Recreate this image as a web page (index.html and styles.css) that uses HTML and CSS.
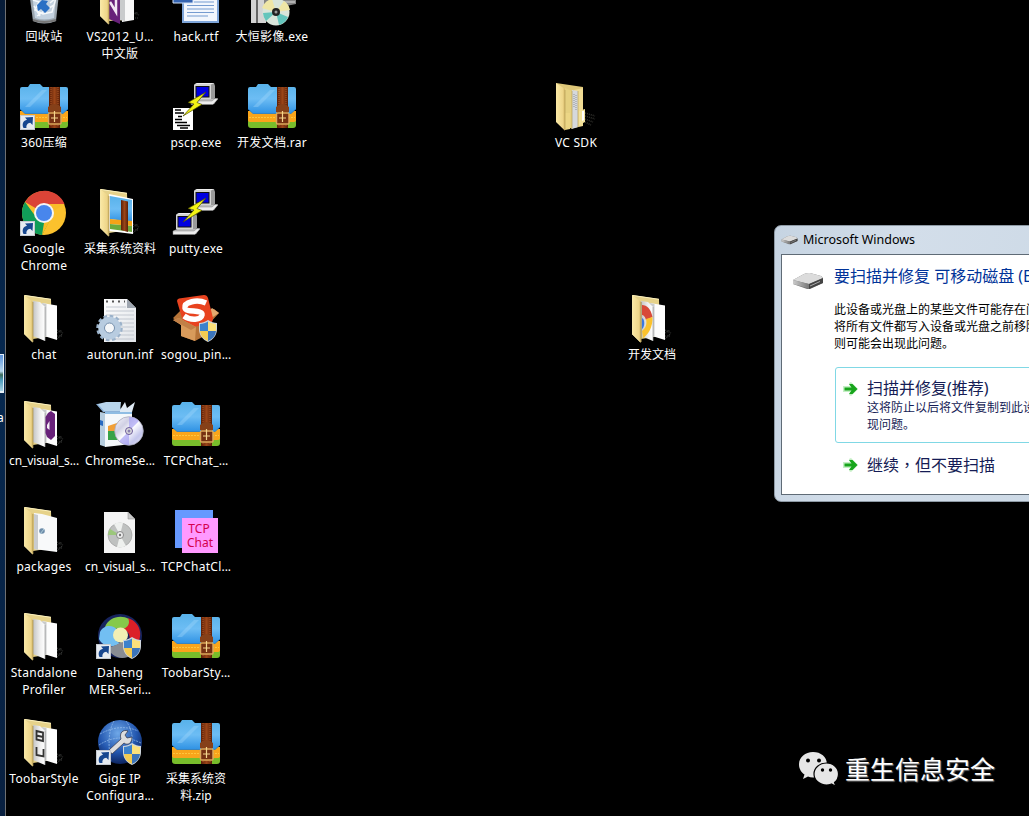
FILE: index.html
```html
<!DOCTYPE html>
<html lang="zh-CN">
<head>
<meta charset="utf-8">
<title>Desktop</title>
<link rel="stylesheet" href="styles.css">
</head>
<body>
<svg class="defs" aria-hidden="true">
  <defs>
    <linearGradient id="gFold" x1="0" x2="1"><stop offset="0" stop-color="#fbe9a6"/><stop offset=".75" stop-color="#eed68a"/><stop offset="1" stop-color="#d2b566"/></linearGradient>
    <linearGradient id="gBlue" x1="0" y1="0" x2="0" y2="1"><stop offset="0" stop-color="#58b2ea"/><stop offset=".5" stop-color="#6dbdf4"/><stop offset="1" stop-color="#2f92e4"/></linearGradient>
    <linearGradient id="gBelt" x1="0" x2="1"><stop offset="0" stop-color="#5c1f08"/><stop offset=".5" stop-color="#9a4518"/><stop offset="1" stop-color="#5a2009"/></linearGradient>
    <linearGradient id="gPage" x1="0" y1="0" x2="1" y2="1"><stop offset="0" stop-color="#fff"/><stop offset="1" stop-color="#dfe3e8"/></linearGradient>
    <linearGradient id="gPaper" x1="0" x2="1"><stop offset="0" stop-color="#c3c4c4"/><stop offset=".6" stop-color="#f0f0f0"/><stop offset="1" stop-color="#fff"/></linearGradient>
    <linearGradient id="gDisc" x1="0" y1="0" x2="1" y2="1"><stop offset="0" stop-color="#fafaff"/><stop offset=".3" stop-color="#d0d0e4"/><stop offset=".5" stop-color="#fff"/><stop offset=".75" stop-color="#c4c6ec"/><stop offset="1" stop-color="#e8e8f4"/></linearGradient>
    <radialGradient id="gGlobe" cx=".45" cy=".3" r=".7"><stop offset="0" stop-color="#6fa8e8"/><stop offset=".6" stop-color="#2458b0"/><stop offset="1" stop-color="#0c2460"/></radialGradient>
    <linearGradient id="gDrive" x1="0" x2="1"><stop offset="0" stop-color="#ccc"/><stop offset="1" stop-color="#777"/></linearGradient>

    <symbol id="arrow" viewBox="0 0 15 15">
      <rect x=".5" y=".5" width="14" height="14" fill="#e6ebf1" stroke="#c4c9d0"/>
      <path d="M3.500 13C1.500 9 3.500 5.500 7 4.800L5 2.500 13 2 12.500 10 10.300 7.800C7.500 8 6 10.500 6.500 13Z" fill="#17478f"/>
    </symbol>
    <symbol id="shield" viewBox="0 0 18 22">
      <path d="M9 0C12 2 15 3 18 3V9C18 15 14 20 9 22 4 20 0 15 0 9V3C3 3 6 2 9 0Z" fill="#cfd6dc"/>
      <path d="M9 1.500V11H1V4C4 4 6.500 3 9 1.500Z" fill="#3c82cc"/><path d="M9 1.500V11H17V4C14 4 11.500 3 9 1.500Z" fill="#fbe07a"/>
      <path d="M1 11H9V21C4.500 19 1.500 16 1 11Z" fill="#f3cb52"/><path d="M17 11H9V21C13.500 19 16.500 16 17 11Z" fill="#3b74ba"/>
    </symbol>
    <symbol id="fback" viewBox="0 0 48 50">
      <path d="M37 36 43 39M37 39 42 36M37 42 43 42M37 45 42 40" stroke="#3a3c3a" stroke-width="1.200" stroke-dasharray="1 1"/>
      <path d="M4 1 31 5 32 42 13 45Z" fill="#e6d28a"/><path d="M5 1.500 31 5.300" stroke="#fbf0bd" fill="none"/>
    </symbol>
    <symbol id="ffront" viewBox="0 0 48 50">
      <path d="M4 1 13 8V48.700L4 40Z" fill="url(#gFold)"/><path d="M4.500 2V40L12.500 48" stroke="#f3e6aa" stroke-width=".7" fill="none"/><path d="M13 8V48" stroke="#a8904c" stroke-width=".7"/>
    </symbol>
    <symbol id="folder" viewBox="0 0 48 50">
      <use href="#fback"/>
      <path d="M22 9 37 11.500V46L24 42Z" fill="#fdfdfd"/><path d="M22 9 26.500 10V43L23 42Z" fill="#c9cbcc"/>
      <path d="M13 7 20 8 25 13V47L13 42Z" fill="url(#gPaper)"/><path d="M25 13V47" stroke="#999" stroke-width=".7"/>
      <use href="#ffront"/>
    </symbol>
    <symbol id="foldervs" viewBox="0 0 48 50">
      <use href="#folder"/><path d="M28 13 31 11 35 14V36L31 40 27 37 25.500 33V17Z" fill="#68217a"/><path d="M27 25 29.500 21V30L27 28Z" fill="#f2eaf4"/>
    </symbol>
    <symbol id="folderpk" viewBox="0 0 48 50">
      <use href="#fback"/><path d="M14 7 22 8 37 12V46L14 43Z" fill="#f8f9fa"/><path d="M14 8 18 9V44L14 43Z" fill="#c9cccf"/><circle cx="22" cy="25" r="2.800" fill="#6e8daa"/><path d="M20 28 24 23" stroke="#b2d0dd"/><use href="#ffront"/>
    </symbol>
    <symbol id="foldertb" viewBox="0 0 48 50">
      <use href="#folder"/>
      <path d="M16.500 13 23 14.500V23L16.500 21.500ZM16.500 17.500 23 19M16.500 29V37L23.500 38.500V31" fill="none" stroke="#333" stroke-width="1.800"/>
    </symbol>
    <symbol id="folderzip" viewBox="0 0 48 50">
      <use href="#fback"/><path d="M13 6 37 11V46L13 43Z" fill="#fff"/><path d="M14 8 36 12V34L14 31Z" fill="url(#gBlue)"/><path d="M14 31 36 33V38L14 36Z" fill="#f5a318"/><path d="M14 36 36 38V44L14 41Z" fill="#6da93c"/><path d="M25 12 32 13.500V44L25 42Z" fill="url(#gBelt)"/><use href="#ffront"/>
    </symbol>
    <symbol id="folderch" viewBox="0 0 48 50">
      <use href="#folder"/>
      <path d="M14 11C19 11 23 15 24.500 23L18 26C17 22 15 21 14 21Z" fill="#d84a38"/><path d="M24.500 23C25 33 20 41 15 44L14 37C18 34 19 30 18 25Z" fill="#fbc22d"/><path d="M14 24C17 25 17 33 14 35Z" fill="#3b78e0"/><use href="#ffront"/>
    </symbol>
    <symbol id="foldersdk" viewBox="0 0 48 50">
      <path d="M33 31 43 34M33 34 43 37M33 37 41 40M33 40 39 43" stroke="#34342f" stroke-width="1.500" stroke-dasharray="1 1"/><path d="M4 1 31 5V43L13 47Z" fill="#dec778"/><path d="M22 8 31 6V44L22 46Z" fill="#f0dc94"/><path d="M20 8 26 9V45L20 47Z" fill="#d5d8dc"/><path d="M22 12V25M24 13V28" stroke="#8e9298" stroke-dasharray="1 1"/><path d="M13 6 20 9V47L13 43Z" fill="#e5d080"/><path d="M27 29 33 27V40L27 43Z" fill="#f3e29b"/><path d="M30 29H32V38L30 39Z" fill="#fff"/><path d="M4 1 13 7V48.700L4 40Z" fill="url(#gFold)"/><path d="M13 31H18V47L13 48Z" fill="#ecd685"/><path d="M13 8V48M20 9V46M26 9V45" stroke="#b59f58" stroke-width=".7"/>
    </symbol>
    <symbol id="zip" viewBox="0 0 48 50">
      <path d="M0 34H48V43Q48 46 45 46H3Q0 46 0 43Z" fill="#78bd2b"/>
      <path d="M0 29H48V38Q48 40 45 40H3Q0 40 0 38Z" fill="#f9a51b"/><path d="M1 35.500H47" stroke="#ffc63c" stroke-dasharray="2 1"/>
      <path d="M0 7Q0 5 2 5H8L10 2H20L23 5H46Q48 5 48 7V27L43 31.500H5L0 27Z" fill="url(#gBlue)"/>
      <path d="M5 25 22 8 27 8 10 25Z" fill="#a5dbfb" opacity=".35"/><path d="M0 27 5 31.500H43L48 27" stroke="#257dcc" fill="none" stroke-width=".8"/>
      <path d="M29 5H40V46H29Z" fill="url(#gBelt)"/><path d="M31 5V45M38 5V45" stroke="#c56c30" stroke-width=".7" stroke-dasharray="1 1"/><path d="M28 30V25Q34 19 41 25V30Z" fill="#854019"/>
      <rect x="28.500" y="31" width="12.500" height="11" rx="1" fill="#763112" stroke="#dba95b" stroke-width="1.500"/><path d="M34.500 29V40M31 36H38" stroke="#f4d58e" stroke-width="1.200"/>
    </symbol>
    <symbol id="pc" viewBox="0 0 28 24">
      <path d="M5 1 7 0H24L25 3V15L22 18H5Z" fill="#9a9a9a"/><path d="M4 1.500H21V16H4Z" fill="#d4d4d4"/><path d="M4 1.500 7 0H24L21 1.500Z" fill="#eee"/><rect x="6" y="3.500" width="13" height="10.500" fill="#0000e0" stroke="#111"/><path d="M1 18 5 16H23L28 15 24 21H1Z" fill="#bdbdbd"/><path d="M1 18H22L25 15.500 28 16 23 21.500H1Z" fill="#ededed" stroke="#888" stroke-width=".5"/>
    </symbol>
    <symbol id="bolt" viewBox="0 0 48 50"><path d="M34 10 16 20.500 22 22 11 34 30 22.500 25 20.500Z" fill="#f4f414" stroke="#4b4b00" stroke-width=".7"/></symbol>
    <symbol id="putty" viewBox="0 0 48 50"><use href="#pc" x="18" y="1" width="28" height="24"/><use href="#pc" x="0" y="25" width="28" height="24"/><use href="#bolt"/></symbol>
    <symbol id="pscp" viewBox="0 0 48 50"><use href="#pc" x="18" y="1" width="28" height="24"/><rect x="1" y="26" width="20" height="22" fill="#fff"/><path d="M3 28H9M3 31H12M6 34.500H10M3 37.500H10M3 40.500H15M5 43.500H18M8 46H16" stroke="#000" stroke-width="1.600"/><use href="#bolt"/></symbol>
    <symbol id="chrome" viewBox="0 0 48 50">
      <circle cx="24" cy="24" r="22" fill="#fbc12d"/><path d="M24 24 5 13A22 22 0 0 1 44.500 15H24Z" fill="#db4437"/><path d="M5 13A22 22 0 0 0 22 46L31.500 28H16Z" fill="#109d58"/><path d="M24 15H44.500L32 23ZM22 46 32 28 24 34Z" fill="#f9bd28"/><circle cx="24" cy="24" r="10" fill="#f5f5f5"/><circle cx="24" cy="24" r="8" fill="#4886ec"/>
    </symbol>
    <symbol id="disc" viewBox="0 0 30 30"><circle cx="15" cy="15" r="14.300" fill="url(#gDisc)" stroke="#aaaabb" stroke-width=".8"/><path d="M15 15 15 1A14 14 0 0 1 25 5ZM15 15 15 29A14 14 0 0 1 5 25Z" fill="#a29bf3" opacity=".65"/><circle cx="15" cy="15" r="3.500" fill="#ddd" stroke="#6a5a9a"/><circle cx="15" cy="15" r="1.500" fill="#8a80b0"/></symbol>
    <symbol id="inf" viewBox="0 0 48 50">
      <path d="M8 4H31L40 13V47H8Z" fill="url(#gPage)"/><path d="M31 4V13H40Z" fill="#9ea6b0"/><path d="M10 6.500H29" stroke="#555" stroke-width="2" stroke-dasharray="2 4"/>
      <path d="M10 12H30M10 16H38M10 20H38M10 24H38M10 28H38M10 32H38M10 36H38M10 40H38M10 44H38" stroke="#b7bec8" stroke-width=".8"/>
      <circle cx="13.500" cy="33" r="11.500" fill="none" stroke="#9bb2ca" stroke-width="3.500" stroke-dasharray="3.500 2.500"/><circle cx="13.500" cy="33" r="8" fill="none" stroke="#b8cce0" stroke-width="6.500"/><circle cx="13.500" cy="33" r="5" fill="#f5f7f9" stroke="#758fac"/>
    </symbol>
    <symbol id="sogou" viewBox="0 0 48 50">
      <path d="M1 24 10 15 23 27 42 15 47 19 36 31V40L23 47 9 42V31Z" fill="#b67438"/><path d="M40 14 47 19 33 28 24 31Z" fill="#e2aa70"/>
      <path d="M5 7Q5 5 7 4.500L32 1Q35 1 36 4L41 24Q41 28 38 29L18 34Q14 34 12 31Z" fill="#e8431f"/>
      <path d="M1 26 7 24 24 33 23 47 9 42V31Z" fill="#d89b5b"/><path d="M1 26 7 24 24 33 19 36Z" fill="#c18047"/>
      <path d="M34 9C25 5 12 8 13 14C14 19 31 15 30 21C29 26 19 27 12 22" stroke="#fff" stroke-width="5.500" fill="none"/>
      <use href="#shield" x="27" y="26" width="18" height="22"/>
    </symbol>
    <symbol id="setup" viewBox="0 0 48 50">
      <path d="M0 4 7 12H26L22 3Z" fill="#8cb2d8"/><path d="M2 4 10 2 25 2 24 11 8 11Z" fill="#b9d6ec"/><path d="M24 10 29 2 31 8 39 2 36 12H24Z" fill="#dfeaf4"/>
      <path d="M4 12 10 13V47L4 45Z" fill="#b6cddf"/><path d="M9 12H36V44L9 47Z" fill="#f4f8fb"/><path d="M9 12H36V14H9Z" fill="#8fbde3"/><path d="M4 20 7 21V26L4 25Z" fill="#276ac1"/><path d="M12 26 24 22V31H12Z" fill="#f1a037"/><path d="M12 31H24V40H12Z" fill="#38a348"/><use href="#disc" x="18" y="16" width="30" height="30"/>
    </symbol>
    <symbol id="iso" viewBox="0 0 48 50"><path d="M8 6H32L39 13V47H8Z" fill="#f4f4f4"/><path d="M32 6V13H39Z" fill="#c8c8c8" stroke="#888" stroke-width=".5"/><circle cx="24" cy="29" r="12" fill="#bfc1c0" stroke="#999" stroke-width=".6"/><path d="M24 29 18 18A12 12 0 0 1 27 17ZM24 29 30 40A12 12 0 0 1 21 41Z" fill="#eef0ee"/><path d="M24 29 12 29A12 12 0 0 1 14 23Z" fill="#9cc77b"/><circle cx="24" cy="29" r="3.500" fill="#eee" stroke="#888"/><circle cx="24" cy="29" r="1.200" fill="#777"/></symbol>
    <symbol id="tcp" viewBox="0 0 48 50"><rect x="3" y="4" width="38" height="38" fill="#6699ff"/><rect x="10" y="12" width="36" height="35" fill="#ff99ff"/><text x="27" y="27" class="tcp-text">TCP</text><text x="28" y="41" class="tcp-text">Chat</text></symbol>
    <symbol id="daheng" viewBox="0 0 48 50">
      <circle cx="24" cy="24" r="22" fill="#17245e"/><path d="M9 15C12 6 24 2 33 7C37 11 35 16 29 18 22 15 17 17 14 20Z" fill="#86c94a"/><path d="M32 6C41 9 47 18 43 29H34C34 22 32 18 25 17 31 17 35 12 32 6Z" fill="#db2028"/><path d="M4 20C8 12 18 13 21 18 17 23 19 30 24 31 17 37 6 34 3 27Z" fill="#72bff2"/><path d="M12 35C22 34 24 29 29 29L32 45C22 48 14 43 12 35Z" fill="#888c93"/><circle cx="24.500" cy="23" r="7.500" fill="#f2efb4"/>
      <use href="#arrow" x="0" y="32" width="15" height="15"/><use href="#shield" x="27" y="25" width="18" height="22"/>
    </symbol>
    <symbol id="gige" viewBox="0 0 48 50">
      <circle cx="24" cy="24" r="22" fill="url(#gGlobe)"/><path d="M4 16Q24 5 42 13M3 27Q23 14 45 25M18 3Q10 17 15 44M30 3Q40 16 35 44" stroke="#9fc4ef" stroke-width=".7" stroke-dasharray="2 1" fill="none"/>
      <path d="M13 32 25 21C23 15 27 11 32 13L29 17 31 20 36 19C36 25 32 28 28 25L16 36Z" fill="#ddd" stroke="#334" stroke-width=".7"/><use href="#arrow" x="0" y="32" width="15" height="15"/><use href="#shield" x="27" y="25" width="18" height="22"/>
    </symbol>
    <symbol id="bin" viewBox="0 0 48 50"><path d="M8 8H40L36 45Q24 50 13 45Z" fill="#9aa5ae"/><path d="M11 10H37L34 42Q24 45 15 42Z" fill="#c3d2e0"/><path d="M13 24 19 26 15 34 23 38 32 36 36 22 30 27M17 40 26 34 34 29M14 30 20 40" stroke="#f4f8fb" stroke-width="1.500" fill="none"/><path d="M17 29 22 24 28 25 26 28 30 32 25 37 21 33 18 35Z" fill="#2a70c4"/><path d="M13 44Q24 48 36 44" stroke="#777" stroke-width="2" fill="none"/></symbol>
    <symbol id="rtf" viewBox="0 0 48 50"><path d="M10 1H47V47H10Z" fill="#7ea5d9"/><path d="M12 1H45V45H12Z" fill="#f2f6fd"/><path d="M22 26H42M15 29.500H42M15 33H42M15 36.500H42M15 40H36" stroke="#759bd0"/><path d="M1 5H21V27H1Z" fill="#3564b2" stroke="#d2e1f6"/></symbol>
    <symbol id="cam" viewBox="0 0 48 50"><path d="M3 3H18V47H3Z" fill="#d4d4d4"/><path d="M9 3V47" stroke="#666" stroke-width="2"/><path d="M16 20H48V28L38 30V42H16Z" fill="#858585"/><path d="M36 26H47" stroke="#ddd"/><circle cx="28" cy="36" r="13.500" fill="#d9e5da"/><path d="M28 36 14 32A14 14 0 0 1 24 23ZM28 36 36 25A14 14 0 0 1 42 34Z" fill="#efe6a6"/><path d="M28 36 18 45A14 14 0 0 1 15 37ZM28 36 31 49A14 14 0 0 0 40 41Z" fill="#64c5bc"/><circle cx="28" cy="36" r="4" fill="#222"/><circle cx="28" cy="36" r="1.500" fill="#999"/></symbol>
    <symbol id="vs" viewBox="0 0 48 50"><path d="M37 36 43 39M37 39 42 36M37 42 43 42" stroke="#3a3c3a" stroke-width="1.200" stroke-dasharray="1 1"/><path d="M4 1 31 5V44L13 45Z" fill="#e6d28a"/><path d="M25 9 38 11V44L26 46Z" fill="#f8f8f8"/><path d="M24 9 29 10V45L24 44Z" fill="#c9cbcc"/><path d="M13 7 24 10V48L13 43Z" fill="#68217a"/><path d="M14 26 20 36 20 18" fill="none" stroke="#f2e6f4" stroke-width="2.500"/><use href="#ffront"/></symbol>
    <symbol id="drive" viewBox="0 0 32 18"><path d="M1 8 12 2Q15 .5 18 1L29 4Q31 5 31 7V11L18 17H15L1 12Z" fill="#777"/><path d="M1 8 12 2Q15 .5 18 1L29 4 31 6 17 12Z" fill="#dcdcdc"/><path d="M1 8 17 12V16.500L1 12Z" fill="url(#gDrive)"/><path d="M17 12 31 6V11L17 17Z" fill="#444"/><path d="M18 14 28 9.500" stroke="#aaa"/></symbol>
    <symbol id="go" viewBox="0 0 16 14"><path d="M0 4H7L6 1 8 0 15 7 8 14 6 13 7 10H0Z" fill="#c4efc4"/><path d="M1.500 5.500H8.500L6 2H9.500L14.500 7 9.500 12H6L8.500 8.500H1.500Z" fill="#18a51c"/></symbol>
  </defs>
</svg>

<div class="screen">
  <aside class="edge"><div class="thumb"></div><span class="edge-label">a</span></aside>
  <main class="icons">
    <div class="item c1 r1"><svg class="icon"><use href="#bin"/></svg><span>回收站</span></div>
    <div class="item c2 r1"><svg class="icon"><use href="#vs"/></svg><span>VS2012_U<i>...</i><br>中文版</span></div>
    <div class="item c3 r1"><svg class="icon"><use href="#rtf"/></svg><span>hack.rtf</span></div>
    <div class="item c4 r1"><svg class="icon"><use href="#cam"/></svg><span>大恒影像.exe</span></div>

    <div class="item c1 r2"><svg class="icon"><use href="#zip"/><use href="#arrow" x="0" y="33" width="15" height="15"/></svg><span>360压缩</span></div>
    <div class="item c3 r2"><svg class="icon"><use href="#pscp"/></svg><span>pscp.exe</span></div>
    <div class="item c4 r2"><svg class="icon"><use href="#zip"/></svg><span>开发文档.rar</span></div>
    <div class="item c8 r2"><svg class="icon"><use href="#foldersdk"/></svg><span>VC SDK</span></div>

    <div class="item c1 r3"><svg class="icon"><use href="#chrome" y="1"/><use href="#arrow" x="0" y="33" width="15" height="15"/></svg><span>Google<br>Chrome</span></div>
    <div class="item c2 r3"><svg class="icon"><use href="#folderzip"/></svg><span class="han">采集系统资料</span></div>
    <div class="item c3 r3"><svg class="icon"><use href="#putty"/></svg><span>putty.exe</span></div>

    <div class="item c1 r4"><svg class="icon"><use href="#folder"/></svg><span>chat</span></div>
    <div class="item c2 r4"><svg class="icon"><use href="#inf" y="1"/></svg><span>autorun.inf</span></div>
    <div class="item c3 r4"><svg class="icon"><use href="#sogou"/></svg><span>sogou_pin<i>...</i></span></div>
    <div class="item c9 r4"><svg class="icon"><use href="#folderch"/></svg><span class="han">开发文档</span></div>

    <div class="item c1 r5"><svg class="icon"><use href="#foldervs"/></svg><span class="tight">cn_visual_s...</span></div>
    <div class="item c2 r5"><svg class="icon"><use href="#setup"/></svg><span>ChromeSe<i>...</i></span></div>
    <div class="item c3 r5"><svg class="icon"><use href="#zip"/></svg><span>TCPChat_<i>...</i></span></div>

    <div class="item c1 r6"><svg class="icon"><use href="#folderpk"/></svg><span>packages</span></div>
    <div class="item c2 r6"><svg class="icon"><use href="#iso"/></svg><span class="tight">cn_visual_s...</span></div>
    <div class="item c3 r6"><svg class="icon"><use href="#tcp"/></svg><span>TCPChatCl<i>...</i></span></div>

    <div class="item c1 r7"><svg class="icon"><use href="#folder"/></svg><span>Standalone<br>Profiler</span></div>
    <div class="item c2 r7"><svg class="icon"><use href="#daheng"/></svg><span>Daheng<br>MER-Seri<i>...</i></span></div>
    <div class="item c3 r7"><svg class="icon"><use href="#zip"/></svg><span>ToobarSty<i>...</i></span></div>

    <div class="item c1 r8"><svg class="icon"><use href="#foldertb"/></svg><span>ToobarStyle</span></div>
    <div class="item c2 r8"><svg class="icon"><use href="#gige"/></svg><span>GigE IP<br>Configura<i>...</i></span></div>
    <div class="item c3 r8"><svg class="icon"><use href="#zip"/></svg><span class="han">采集系统资<br>料.zip</span></div>
  </main>

  <section class="dialog">
    <header class="titlebar"><svg class="drive-small"><use href="#drive"/></svg><span>Microsoft Windows</span></header>
    <div class="content">
      <svg class="drive-big"><use href="#drive"/></svg>
      <div class="message">
        <h1>要扫描并修复 可移动磁盘 (E:)</h1>
        <p>此设备或光盘上的某些文件可能存在问<br>将所有文件都写入设备或光盘之前移除<br>则可能会出现此问题。</p>
        <div class="command command-active"><svg class="go"><use href="#go"/></svg><div><h2>扫描并修复(推荐)</h2><p>这将防止以后将文件复制到此设<br>现问题。</p></div></div>
        <div class="command"><svg class="go"><use href="#go"/></svg><div><h2>继续<span class="comma" lang="zh-TW">，</span>但不要扫描</h2></div></div>
      </div>
    </div>
  </section>

  <footer class="watermark">
    <svg class="wechat" viewBox="0 0 40 34"><path d="M14 0C6 0 0 5.500 0 12.500 0 17 2.500 20.500 5.500 22.500L4 27 9 24.500Q11 25.500 14 25.500C22 25.500 28 20 28 12.500S22 0 14 0Z" fill="#e6e6e6"/><path d="M27.500 11C20.500 11 15 16 15 22S20.500 33 27.500 33Q30 33 32.500 32L37 34.500 35.500 30.500C38 28.500 39.500 25.500 39.500 22 39.500 16 34.500 11 27.500 11Z" fill="#e6e6e6" stroke="#000" stroke-width="1.200"/><g fill="#000"><circle cx="9" cy="8.500" r="2"/><circle cx="20" cy="8.500" r="2"/><circle cx="23.500" cy="18" r="1.700"/><circle cx="31.500" cy="18" r="1.700"/></g></svg>
    <span>重生信息安全</span>
  </footer>
</div>
</body>
</html>
```
FILE: styles.css
```css
* { box-sizing: border-box; }
body { margin: 0; background: #000; }
h1, h2, p { margin: 0; font-weight: 400; }
.defs { position: absolute; width: 0; height: 0; }

.screen {
  position: relative;
  display: flex;
  width: 1029px;
  height: 816px;
  overflow: hidden;
  background: #000;
  font-family: "Noto Sans", "Noto Sans CJK SC", sans-serif;
  font-size: 12px;
  line-height: 17px;
}

.edge {
  flex: none;
  width: 6px;
  padding-top: 354px;
  overflow: hidden;
  border-right: 1px solid #6e7072;
  background: linear-gradient(#071c38, #06284f 45%, #082040);
  color: #fff;
}
.thumb {
  height: 39px;
  margin-right: 1px;
  border: solid #e8f2fa;
  border-width: 1px 1px 2px 0;
  background: linear-gradient(#5b93dc, #b8d8ef 45%, #3b6a5a 55%, #4e9dbd 70%, #a9d4e6);
}
.edge-label { display: block; margin: 16px 0 0 -3px; }

.icons {
  display: grid;
  flex: none;
  grid-template-columns: repeat(9, 76px);
  grid-template-rows: repeat(8, 106px);
  margin-top: -24px;
  height: 848px;
}
.item {
  display: flex;
  flex-direction: column;
  align-items: center;
  gap: 2px;
  color: #fff;
  letter-spacing: .28px;
  text-align: center;
  white-space: nowrap;
}
.item i { font-style: normal; letter-spacing: -.1px; }
.item .tight { letter-spacing: -.1px; }
.item .han { letter-spacing: 0; }
.icon { flex: none; width: 48px; height: 50px; overflow: visible; }
.tcp-text { fill: #d4004c; font: 12px "Noto Sans", sans-serif; letter-spacing: 0; text-anchor: middle; }

.c1 { grid-column: 1; } .c2 { grid-column: 2; } .c3 { grid-column: 3; }
.c4 { grid-column: 4; } .c8 { grid-column: 8; } .c9 { grid-column: 9; }
.r1 { grid-row: 1; } .r2 { grid-row: 2; } .r3 { grid-row: 3; } .r4 { grid-row: 4; }
.r5 { grid-row: 5; } .r6 { grid-row: 6; } .r7 { grid-row: 7; } .r8 { grid-row: 8; }

.dialog {
  position: absolute;
  left: 774px;
  top: 225px;
  display: flex;
  flex-direction: column;
  width: 400px;
  height: 277px;
  padding: 0 7px 6px 6px;
  border: 1px solid #8e9aa5;
  border-radius: 7px;
  background: linear-gradient(100deg, #c6d4e2, #d3deea 30%, #c8d6e3);
  color: #000;
  white-space: nowrap;
}
.titlebar { display: flex; align-items: center; gap: 5px; height: 28px; padding-bottom: 1px; font-size: 12.500px; }
.drive-small { width: 17px; height: 10px; }
.content {
  display: flex;
  flex: 1;
  gap: 10px;
  padding: 10px 0 0 10px;
  border: 1px solid #5f6b76;
  background: #fff;
}
.drive-big { flex: none; width: 32px; height: 18px; margin-top: 7px; }
.message { flex: 1; }
.message h1 { margin-bottom: 14px; color: #003399; font-size: 16px; line-height: 22px; }
.command {
  display: flex;
  gap: 8px;
  margin-left: 1px;
  padding: 10px 8px;
  width: 330px;
  color: #151c55;
}
.command-active { margin-top: 15px; height: 76px; padding: 9px 7px; border: 1px solid #80d8e5; border-radius: 3px; }
.command h2 { font-size: 16px; line-height: 22px; }
.comma { font-family: "Noto Sans CJK SC", sans-serif; }
.comma:lang(zh-TW) { font-family: "Noto Sans CJK TC", sans-serif; }
.go { flex: none; width: 16px; height: 14px; margin-top: 5px; }

.watermark {
  position: absolute;
  left: 799px;
  top: 750px;
  display: flex;
  gap: 6px;
  color: #fff;
  font-family: "Noto Sans CJK SC", sans-serif;
  font-size: 25px;
  line-height: 36px;
  text-shadow: 1px 1px 1px #777;
}
.wechat { width: 40px; height: 34px; margin-top: 2px; overflow: visible; }
```
